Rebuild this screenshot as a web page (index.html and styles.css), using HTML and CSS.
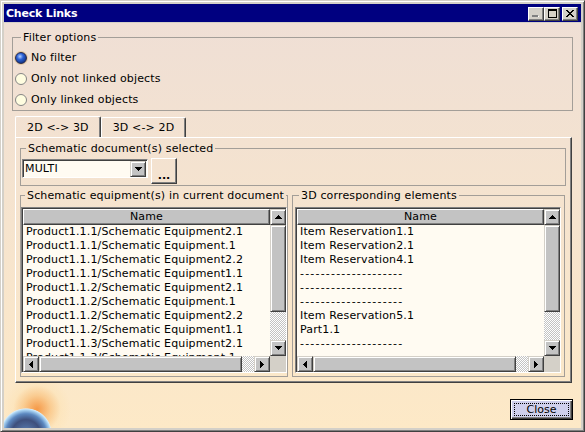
FILE: index.html
```html
<!DOCTYPE html>
<html lang="en">
<head>
    <meta charset="UTF-8">
    <title>Check Links</title>
    <link rel="stylesheet" href="styles.css">
</head>
<body>
<div class="window">
    <div class="titlebar">
        <span class="title">Check Links</span>
        <div class="caption-btns">
            <span class="cbtn">
                <svg width="8" height="3" viewBox="0 0 8 3"><path d="M1 1h6v1H1z" fill="#fff"/><path d="M0 0h6v2H0z" fill="#808080"/></svg>
            </span>
            <span class="cbtn">
                <svg width="9" height="9" viewBox="0 0 9 9"><path d="M0 0h9v9H0zM1 2v6h7V2z" fill="#000" fill-rule="evenodd"/></svg>
            </span>
            <span class="cbtn cbtn-close">
                <svg width="8" height="7" viewBox="0 0 8 7"><path d="M0 0h2v1h1v1h2V1h1V0h2v1H7v1H6v1H5v1h1v1h1v1h1v1H6V6H5V5H3v1H2v1H0V6h1V5h1V4h1V3H2V2H1V1H0z" fill="#000"/></svg>
            </span>
        </div>
    </div>

    <div class="client">
        <fieldset class="group filter">
            <legend>Filter options</legend>
            <label class="opt"><span class="radio checked"></span>No filter</label>
            <label class="opt"><span class="radio"></span>Only not linked objects</label>
            <label class="opt"><span class="radio"></span>Only linked objects</label>
        </fieldset>

        <div class="tabs">
            <div class="tab active">2D &lt;-&gt; 3D</div>
            <div class="tab">3D &lt;-&gt; 2D</div>
        </div>

        <div class="panel">
            <fieldset class="group docs">
                <legend>Schematic document(s) selected</legend>
                <div class="docrow">
                    <div class="combo">
                        <span class="combo-text">MULTI</span>
                        <span class="sbtn combo-btn">
                            <svg width="7" height="4" viewBox="0 0 7 4"><path d="M0 0h7v1H0zM1 1h5v1H1zM2 2h3v1H2zM3 3h1v1H3z"/></svg>
                        </span>
                    </div>
                    <button class="dots">...</button>
                </div>
            </fieldset>

            <div class="lists">
                <fieldset class="group">
                    <legend>Schematic equipment(s) in current document</legend>
                    <div class="listbox">
                        <div class="items">
                            <div class="head">Name</div>
                            <div class="row">Product1.1.1/Schematic Equipment2.1</div>
                            <div class="row">Product1.1.1/Schematic Equipment.1</div>
                            <div class="row">Product1.1.1/Schematic Equipment2.2</div>
                            <div class="row">Product1.1.1/Schematic Equipment1.1</div>
                            <div class="row">Product1.1.2/Schematic Equipment2.1</div>
                            <div class="row">Product1.1.2/Schematic Equipment.1</div>
                            <div class="row">Product1.1.2/Schematic Equipment2.2</div>
                            <div class="row">Product1.1.2/Schematic Equipment1.1</div>
                            <div class="row">Product1.1.3/Schematic Equipment2.1</div>
                            <div class="row">Product1.1.3/Schematic Equipment.1</div>
                        </div>
                        <div class="vscroll">
                            <span class="sbtn"><svg width="7" height="4" viewBox="0 0 7 4"><path d="M3 0h1v1H3zM2 1h3v1H2zM1 2h5v1H1zM0 3h7v1H0z"/></svg></span>
                            <span class="thumb vthumb"></span>
                            <span class="track"></span>
                            <span class="sbtn"><svg width="7" height="4" viewBox="0 0 7 4"><path d="M0 0h7v1H0zM1 1h5v1H1zM2 2h3v1H2zM3 3h1v1H3z"/></svg></span>
                        </div>
                        <div class="hscroll">
                            <span class="sbtn"><svg width="4" height="7" viewBox="0 0 4 7"><path d="M3 0h1v7H3zM2 1h1v5H2zM1 2h1v3H1zM0 3h1v1H0z"/></svg></span>
                            <span class="thumb hthumb"></span>
                            <span class="track"></span>
                            <span class="sbtn"><svg width="4" height="7" viewBox="0 0 4 7"><path d="M0 0h1v7H0zM1 1h1v5H1zM2 2h1v3H2zM3 3h1v1H3z"/></svg></span>
                        </div>
                        <div class="corner"></div>
                    </div>
                </fieldset>

                <fieldset class="group right">
                    <legend>3D corresponding elements</legend>
                    <div class="listbox">
                        <div class="items">
                            <div class="head">Name</div>
                            <div class="row">Item Reservation1.1</div>
                            <div class="row">Item Reservation2.1</div>
                            <div class="row">Item Reservation4.1</div>
                            <div class="row sep">--------------------</div>
                            <div class="row sep">--------------------</div>
                            <div class="row sep">--------------------</div>
                            <div class="row">Item Reservation5.1</div>
                            <div class="row">Part1.1</div>
                            <div class="row sep">--------------------</div>
                            <div class="row sep">--------------------</div>
                        </div>
                        <div class="vscroll">
                            <span class="sbtn"><svg width="7" height="4" viewBox="0 0 7 4"><path d="M3 0h1v1H3zM2 1h3v1H2zM1 2h5v1H1zM0 3h7v1H0z"/></svg></span>
                            <span class="thumb vthumb"></span>
                            <span class="track"></span>
                            <span class="sbtn"><svg width="7" height="4" viewBox="0 0 7 4"><path d="M0 0h7v1H0zM1 1h5v1H1zM2 2h3v1H2zM3 3h1v1H3z"/></svg></span>
                        </div>
                        <div class="hscroll">
                            <span class="sbtn"><svg width="4" height="7" viewBox="0 0 4 7"><path d="M3 0h1v7H3zM2 1h1v5H2zM1 2h1v3H1zM0 3h1v1H0z"/></svg></span>
                            <span class="thumb hthumb"></span>
                            <span class="track"></span>
                            <span class="sbtn"><svg width="4" height="7" viewBox="0 0 4 7"><path d="M0 0h1v7H0zM1 1h1v5H1zM2 2h1v3H2zM3 3h1v1H3z"/></svg></span>
                        </div>
                        <div class="corner"></div>
                    </div>
                </fieldset>
            </div>
        </div>

        <div class="footer">
            <button class="close-btn"><span class="focus">Close</span></button>
        </div>
    </div>
</div>
</body>
</html>
```

FILE: styles.css
```css
*{
    box-sizing: border-box;
}
body{
    margin: 0;
    background: #d4d0c8;
    font-family: "DejaVu Sans", Verdana, sans-serif;
    font-size: 11px;
    letter-spacing: 0.15px;
    color: #000;
}

/* window frame */
.window{
    width: 585px;
    height: 432px;
    border: 1px solid;
    border-color: #d4d0c8 #404040 #404040 #d4d0c8;
    box-shadow: inset 1px 1px #fff, inset -1px -1px #808080;
    padding: 3px;
    display: flex;
    flex-direction: column;
}
.titlebar{
    flex: none;
    height: 18px;
    background: #000080;
    color: #fff;
    display: flex;
    align-items: center;
    justify-content: space-between;
    padding: 0 3px 0 2px;
}
.title{
    font-weight: bold;
    letter-spacing: -0.2px;
}
.caption-btns{
    display: flex;
    margin-top: 1px;
}
.cbtn{
    width: 16px;
    height: 14px;
    background: #d4d0c8;
    border: 1px solid;
    border-color: #fff #404040 #404040 #fff;
    box-shadow: inset -1px -1px #808080;
    display: flex;
    align-items: center;
    justify-content: center;
}
.cbtn:first-child svg{
    margin-top: 5px;
}
.cbtn-close{
    margin-left: 2px;
}

/* client area */
.client{
    flex: 1;
    margin-top: 1px;
    padding: 8px;
    display: flex;
    flex-direction: column;
    background:
        radial-gradient(circle 26px at 22px 411px, #5f86bb 0, #3e4f7c 55%, #5c88c0 78%, #a8d2f2 92%, #d8ecf8 97%, rgba(216,236,248,0) 100%),
        radial-gradient(circle 34px at 33px 386px, rgba(244,140,50,0.85) 0, rgba(248,180,100,0.55) 40%, rgba(252,220,160,0.25) 70%, rgba(252,230,190,0) 100%),
        linear-gradient(#efdfd5, #fde9c7);
}

.group{
    margin: 0;
    padding: 0;
    min-width: 0;
    border: 1px solid #a39e98;
}
.group legend{
    padding: 0 2px;
    margin-left: 4px;
    line-height: 13px;
}

.filter{
    padding: 3px 0 0 2px;
}
.filter legend{
    margin-left: 6px;
}
.opt{
    height: 21px;
    display: flex;
    align-items: center;
    gap: 4px;
}
.radio{
    width: 12px;
    height: 12px;
    border-radius: 50%;
    border: 1px solid #858585;
    background: #fffde0;
}
.radio.checked{
    border-color: #2a2a48;
    background: radial-gradient(circle at 40% 35%, #b4d0ff 0, #2c62d6 35%, #10307e 80%);
    box-shadow: 0 0 0 1px #e2c8a4;
}

/* tabs */
.tabs{
    display: flex;
    align-items: flex-end;
    height: 21px;
    margin: 5px 1px 0 3px;
}
.tab{
    height: 20px;
    padding: 0 11px;
    border: 1px solid;
    border-bottom: none;
    border-color: #fff #404040 transparent #fff;
    box-shadow: inset -1px 0 #808080;
    border-radius: 2px 2px 0 0;
    display: flex;
    align-items: center;
}
.tab.active{
    height: 21px;
}
.panel{
    margin: 0 1px 0 3px;
    border: 1px solid;
    border-color: #fff #404040 #404040 #fff;
    box-shadow: inset -1px -1px #808080;
    padding: 0 5px 5px 4px;
}

/* document selector */
.docs{
    margin-top: 4px;
    padding: 3px 0 1px 1px;
}
.docrow{
    display: flex;
    align-items: flex-start;
    gap: 3px;
}
.combo{
    width: 126px;
    height: 19px;
    margin-top: 1px;
    border: 1px solid;
    border-color: #808080 #fff #fff #808080;
    box-shadow: inset 1px 1px #404040;
    background: #fffbf2;
    display: flex;
    align-items: center;
    padding: 1px 1px 1px 2px;
}
.combo-text{
    flex: 1;
}
.combo-btn{
    width: 13px;
    height: 15px;
}
.dots{
    width: 26px;
    height: 26px;
    padding: 0 0 3px;
    background: transparent;
    border: 1px solid;
    border-color: #fff #404040 #404040 #fff;
    box-shadow: inset -1px -1px #808080;
    font: bold 11px "DejaVu Sans", sans-serif;
    line-height: 8px;
    display: flex;
    align-items: flex-end;
    justify-content: center;
}

/* lists */
.lists{
    display: grid;
    grid-template-columns: 268px 273px;
    gap: 4px;
    margin-top: 3px;
}
.lists .group{
    padding: 5px 0 3px 0;
}
.lists .right{
    padding: 5px 3px 3px 2px;
}
.listbox{
    height: 166px;
    border: 1px solid;
    border-color: #808080 #fff #fff #808080;
    box-shadow: inset 1px 1px #404040;
    padding: 1px 0 0 1px;
    background: #fffbf2;
    display: grid;
    grid-template-columns: 1fr 16px;
    grid-template-rows: 1fr 16px;
}
.items{
    overflow: hidden;
    min-width: 0;
}
.head{
    height: 16px;
    background: #c3c3c3;
    border: 1px solid;
    border-color: #fff #404040 #404040 #fff;
    box-shadow: inset -1px -1px #808080;
    text-align: center;
    line-height: 14px;
}
.row{
    height: 14px;
    line-height: 14px;
    padding-left: 3px;
    white-space: nowrap;
}
.sep{
    letter-spacing: 1.2px;
}

.sbtn{
    flex: none;
    width: 16px;
    height: 16px;
    background: #c3c3c3;
    border: 1px solid;
    border-color: #d4d0c8 #404040 #404040 #d4d0c8;
    box-shadow: inset 1px 1px #fff, inset -1px -1px #808080;
    display: flex;
    align-items: center;
    justify-content: center;
}
.vscroll{
    display: flex;
    flex-direction: column;
}
.hscroll{
    display: flex;
}
.thumb{
    flex: none;
    background: #c3c3c3;
    border: 1px solid;
    border-color: #d4d0c8 #404040 #404040 #d4d0c8;
    box-shadow: inset 1px 1px #fff, inset -1px -1px #808080;
}
.vthumb{
    height: 87px;
}
.hthumb{
    width: 203px;
}
.track{
    flex: 1;
    background: repeating-conic-gradient(#c3c3c3 0 25%, #fff 0 50%) 0 0 / 2px 2px;
}
.corner{
    background: #d4d0c8;
}

/* bottom */
.footer{
    margin-top: auto;
    display: flex;
    justify-content: flex-end;
}
.close-btn{
    width: 63px;
    height: 21px;
    padding: 3px;
    border: 1px solid #000;
    background: #cfd0ec;
    box-shadow: inset 1px 1px #fff, inset -1px -1px #404040, inset -2px -2px #808080;
    font: 11px "DejaVu Sans", sans-serif;
    display: flex;
}
.focus{
    flex: 1;
    border: 1px dotted #000;
    line-height: 11px;
    text-align: center;
}
```
